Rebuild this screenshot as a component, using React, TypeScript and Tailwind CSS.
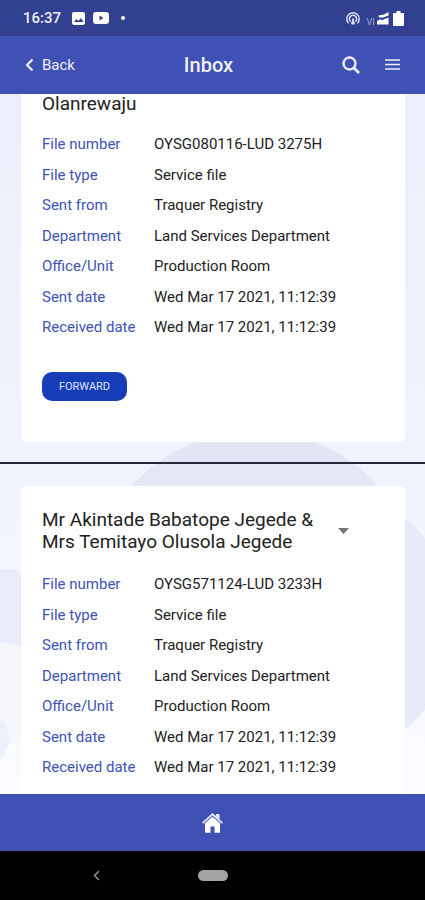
interface InboxFile {
  title: string;
  fileNumber: string;
  fileType: string;
  sentFrom: string;
  department: string;
  office: string;
  sentDate: string;
  receivedDate: string;
}

const files: InboxFile[] = [
  {
    title: 'Olanrewaju',
    fileNumber: 'OYSG080116-LUD 3275H',
    fileType: 'Service file',
    sentFrom: 'Traquer Registry',
    department: 'Land Services Department',
    office: 'Production Room',
    sentDate: 'Wed Mar 17 2021, 11:12:39',
    receivedDate: 'Wed Mar 17 2021, 11:12:39',
  },
  {
    title: 'Mr Akintade Babatope Jegede & Mrs Temitayo Olusola Jegede',
    fileNumber: 'OYSG571124-LUD 3233H',
    fileType: 'Service file',
    sentFrom: 'Traquer Registry',
    department: 'Land Services Department',
    office: 'Production Room',
    sentDate: 'Wed Mar 17 2021, 11:12:39',
    receivedDate: 'Wed Mar 17 2021, 11:12:39',
  },
];

function StatusBar() {
  return (
    <div className="flex h-9 shrink-0 items-center justify-between bg-[#32418f] pl-[23px] pr-[21px] text-[#eef0fb]">
      <div className="flex items-center">
        <span className="w-[49px] text-[15px] font-medium">16:37</span>
        <svg className="mr-2 h-[13px] w-[13px]" viewBox="0 0 13 13" aria-hidden="true">
          <rect width="13" height="13" rx="2" fill="#fff" />
          <path d="M2 10 4.500 7l2 2L9 6l2.500 4z" fill="#32418f" />
        </svg>
        <svg className="mr-3 h-3 w-4" viewBox="0 0 16 12" aria-hidden="true">
          <rect width="16" height="12" rx="3" fill="#fff" />
          <path d="M6.500 3.500v5L10.500 6z" fill="#32418f" />
        </svg>
        <span className="h-1 w-1 rounded-full bg-white" />
      </div>
      <div className="flex items-center">
        <svg className="mr-1 h-[14px] w-[14px]" viewBox="0 0 14 14" fill="none" stroke="#d5daf3" aria-hidden="true">
          <path d="M2.600 12.300A6.200 6.200 0 1 1 11.400 12.300" strokeWidth="1.500" />
          <path d="M4.500 10.500A3.600 3.600 0 1 1 9.500 10.500" strokeWidth="1.500" />
          <path d="M7 7.500 5.500 13h3z" fill="#d5daf3" />
        </svg>
        <span className="mt-2 w-[13px] text-center text-[9px] leading-3 text-[#a3add8]">VI</span>
        <svg className="mr-1 h-[14px] w-3" viewBox="0 0 12 14" fill="#fff" aria-hidden="true">
          <path d="M1.500 4.500 7 3.500 11.500 1v3.500L6 6.500H2z" />
          <path d="M0 13.500V10l2.500-1.500 3 .5 6-2.500v7z" />
        </svg>
        <svg className="h-[15px] w-[11px]" viewBox="0 0 11 15" aria-hidden="true">
          <path d="M3.500 0h4v2H10q1 0 1 1v11q0 1-1 1H1q-1 0-1-1V3q0-1 1-1h2.500z" fill="#fff" />
        </svg>
      </div>
    </div>
  );
}

function Header() {
  return (
    <header className="flex h-[58px] shrink-0 items-center justify-between bg-[#3f51b5] px-6 text-[#eef0fb]">
      <button type="button" className="flex items-center gap-2 text-[15px]">
        <svg className="h-[14px] w-[10px]" viewBox="0 0 10 14" fill="none" stroke="currentColor" strokeWidth="2.200" aria-hidden="true">
          <path d="M8.500 1.500 3 7 8.500 12.500" />
        </svg>
        Back
      </button>
      <h1 className="text-xl font-medium">Inbox</h1>
      <div className="flex items-center gap-6">
        <button type="button" aria-label="Search">
          <svg className="h-[18px] w-[18px]" viewBox="0 0 18 18" fill="none" stroke="currentColor" aria-hidden="true">
            <circle cx="7.500" cy="7.500" r="6" strokeWidth="2.400" />
            <path d="m12 12 5 5" strokeWidth="2.800" />
          </svg>
        </button>
        <button type="button" aria-label="Menu">
          <svg className="h-3 w-[17px]" viewBox="0 0 17 12" stroke="currentColor" strokeWidth="1.500" aria-hidden="true">
            <path d="M1 1h15M1 5.500h15M1 10h15" />
          </svg>
        </button>
      </div>
    </header>
  );
}

function Backdrop() {
  return (
    <svg className="absolute inset-x-0 top-0 w-full" viewBox="0 0 425 700" aria-hidden="true">
      <defs>
        <linearGradient id="disc" x1="0" y1="0" x2="0" y2="1">
          <stop offset="0" stopColor="#e1e6f5" />
          <stop offset="1" stopColor="#ebedfa" />
        </linearGradient>
      </defs>
      <circle cx="255" cy="504" r="167" fill="url(#disc)" />
      <circle cx="318" cy="530" r="137" fill="#e7eaf8" />
      <circle cx="5" cy="520" r="45" fill="#e8ebf9" />
      <circle cx="0" cy="600" r="52" fill="#f5f7fd" />
      <circle cx="-22" cy="644" r="31" fill="#ecf0fa" />
    </svg>
  );
}

function FileDetails({ file }: { file: InboxFile }) {
  const rows = [
    ['File number', file.fileNumber],
    ['File type', file.fileType],
    ['Sent from', file.sentFrom],
    ['Department', file.department],
    ['Office/Unit', file.office],
    ['Sent date', file.sentDate],
    ['Received date', file.receivedDate],
  ];

  return (
    <dl className="mt-4 grid h-[214px] auto-rows-fr text-[15px]">
      {rows.map(([label, value]) => (
        <div key={label} className="grid grid-cols-[112px_1fr] items-center">
          <dt className="text-[#4053b4]">{label}</dt>
          <dd className="text-[#222]">{value}</dd>
        </div>
      ))}
    </dl>
  );
}

export default function App() {
  const [current, next] = files;

  return (
    <div className="flex h-screen flex-col overflow-hidden font-['Roboto',sans-serif]">
      <StatusBar />
      <Header />

      <main className="relative min-h-0 flex-1 overflow-hidden bg-linear-to-b from-[#eceffb] via-[#f0f3fd] to-[#fbfcff]">
        <Backdrop />
        <div className="relative">
          <article className="ml-[21px] mr-5 rounded-b-[5px] bg-white px-[21px] pb-[41px]">
            <h2 className="text-[19px] leading-[19px] text-[#222]">{current.title}</h2>
            <FileDetails file={current} />
            <button
              type="button"
              className="mt-[29px] block h-[29px] w-[85px] rounded-[10px] bg-[#173cb8] pt-px text-[11px] text-[#dfe6ff]"
            >
              FORWARD
            </button>
          </article>

          <hr className="mb-[22px] mt-5 border-t-2 border-[#25283a]" />

          <article className="ml-[21px] mr-5 rounded-t-[5px] bg-white px-[21px] pb-10 pt-[23px]">
            <div className="flex items-center justify-between pr-[35px]">
              <h2 className="w-[285px] text-[19px] leading-[22px] text-[#222]">{next.title}</h2>
              <button type="button" aria-label="Toggle details">
                <svg className="h-[6px] w-[11px]" viewBox="0 0 11 6" fill="#757575" aria-hidden="true">
                  <path d="M0 0h11L5.500 6z" />
                </svg>
              </button>
            </div>
            <FileDetails file={next} />
          </article>
        </div>
      </main>

      <footer className="flex h-[57px] shrink-0 items-center justify-center bg-[#3f51b5]">
        <button type="button" aria-label="Home">
          <svg className="h-5 w-[21px]" viewBox="0 0 21 20" fill="#fff" aria-hidden="true">
            <path d="M10.500 3.700 3 10.300V19q0 .8.800.8H8.500V13.500h4v6.300h4.700q.8 0 .8-.8v-8.700z" />
            <path d="M10.500 0 14 3.100V1h3.500v5.200L21 9.500l-1.200 1.300-9.300-8.300-9.300 8.300L0 9.500z" fill="#e3e7fc" />
          </svg>
        </button>
      </footer>

      <nav className="grid h-[49px] shrink-0 grid-cols-[1fr_auto_1fr] items-center bg-black pb-px">
        <button type="button" aria-label="System back" className="mr-1 justify-self-center">
          <svg className="h-[11px] w-[7px]" viewBox="0 0 7 11" fill="none" stroke="#8c8c8c" strokeWidth="1.600" aria-hidden="true">
            <path d="M6 1 1.500 5.500 6 10" />
          </svg>
        </button>
        <button type="button" aria-label="System home" className="h-[11px] w-[30px] rounded-full bg-[#a3a3a3]" />
      </nav>
    </div>
  );
}
